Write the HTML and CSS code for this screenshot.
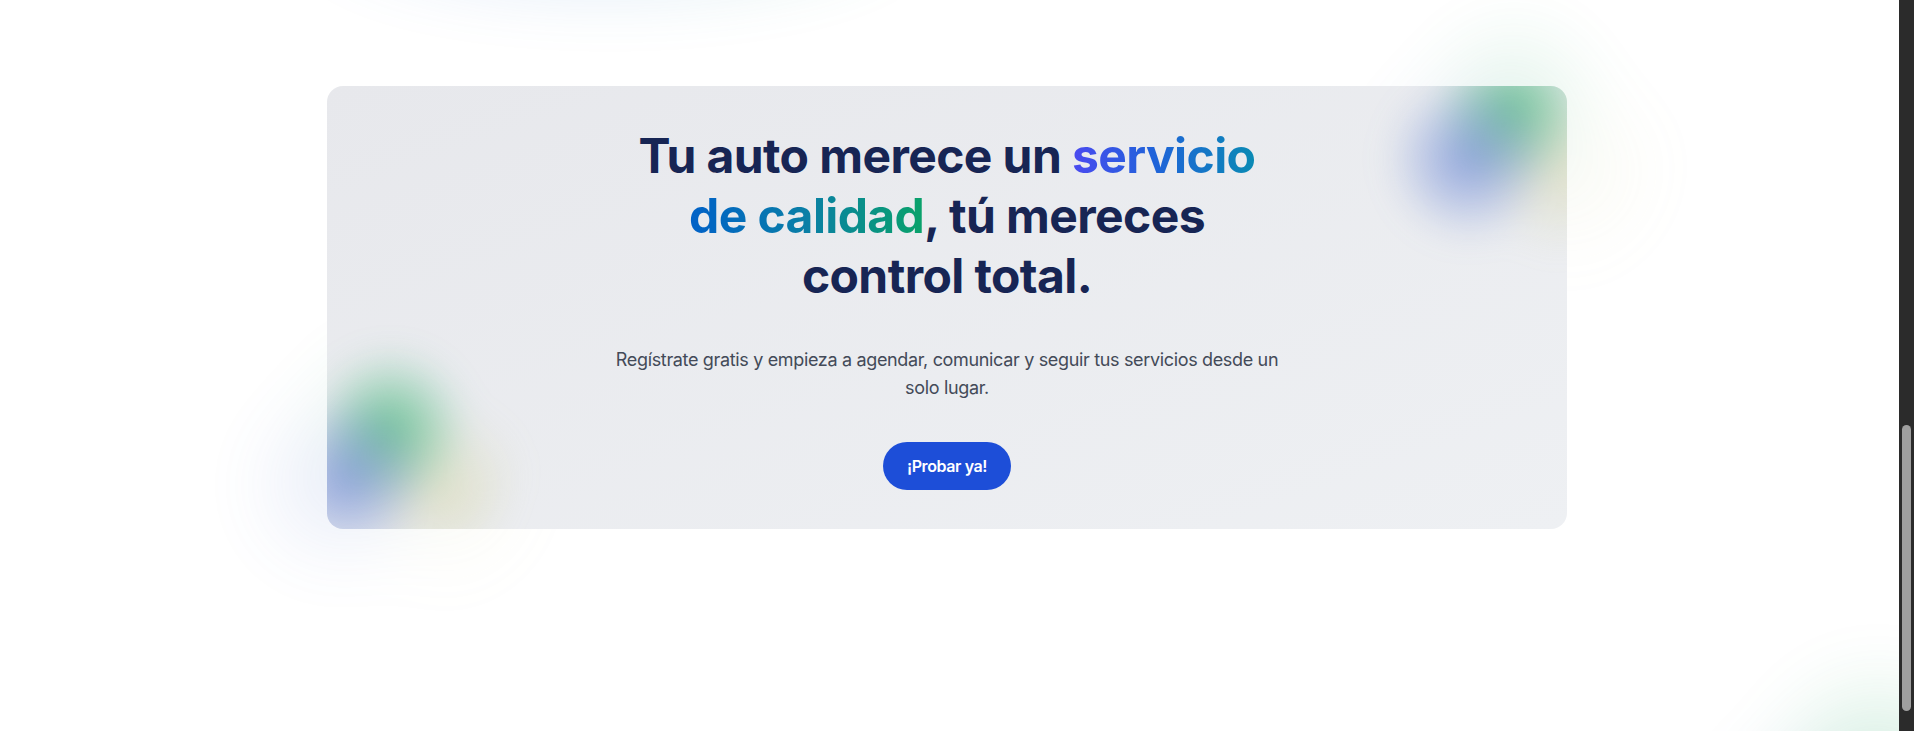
FILE: index.html
```html
<!DOCTYPE html>
<html lang="es">
<head>
<meta charset="utf-8">
<title>Tu auto merece un servicio de calidad</title>
<link rel="stylesheet" href="styles.css">
</head>
<body>
<div class="viewport">
  <main class="page">
    <div class="orb orb-top" aria-hidden="true"></div>
    <div class="orb halo halo-tr" aria-hidden="true"></div>
    <div class="orb halo halo-bl" aria-hidden="true"></div>
    <div class="orb orb-br" aria-hidden="true"></div>
    <section class="cta">
      <div class="card">
        <div class="orb glow glow-tr" aria-hidden="true"></div>
        <div class="orb glow glow-bl" aria-hidden="true"></div>
        <h2 class="title">Tu auto merece un <span class="grad grad-a">servicio</span> <span class="grad grad-b">de calidad</span>, tú mereces control total.</h2>
        <p class="lead">Regístrate gratis y empieza a agendar, comunicar y seguir tus servicios desde un solo lugar.</p>
        <a class="btn" href="#">¡Probar ya!</a>
      </div>
    </section>
  </main>
  <aside class="scrollbar" aria-hidden="true"><div class="thumb"></div></aside>
</div>
</body>
</html>
```
FILE: styles.css
```css
html, body {
  margin: 0;
  padding: 0;
  height: 100%;
  overflow: hidden;
  background: #ffffff;
}

.viewport {
  display: flex;
  height: 100vh;
}

.page {
  flex: 1;
  position: relative;
  overflow: hidden;
  background: #ffffff;
}

.cta {
  position: relative;
  z-index: 1;
  padding: 86px 5px 0 0;
}

.card {
  position: relative;
  overflow: hidden;
  width: 1240px;
  margin: 0 auto;
  box-sizing: border-box;
  border-radius: 16px;
  background: linear-gradient(to bottom right, #e7e8ec, #eef0f3);
  padding: 40px 24px 39px;
  display: flex;
  flex-direction: column;
  align-items: center;
  gap: 40px;
}

.title {
  position: relative;
  margin: 0;
  max-width: 640px;
  text-align: center;
  font-family: Inter, "Noto Sans", sans-serif;
  font-weight: 700;
  font-size: 48px;
  line-height: 60px;
  letter-spacing: -0.6px;
  color: #172554;
}

.grad {
  -webkit-background-clip: text;
  background-clip: text;
  -webkit-text-fill-color: transparent;
  color: transparent;
}

.grad-a {
  background-image: linear-gradient(90deg, #4a4af0 0%, #1f63d9 45%, #0a8ab4 100%);
}

.grad-b {
  background-image: linear-gradient(90deg, #0061c8 0%, #0a7fa6 50%, #0aa26a 100%);
}

.lead {
  position: relative;
  margin: 0;
  max-width: 672px;
  text-align: center;
  font-family: Inter, "Noto Sans", sans-serif;
  font-weight: 400;
  font-size: 18px;
  line-height: 28px;
  letter-spacing: -0.34px;
  color: #434a58;
}

.btn {
  position: relative;
  display: inline-block;
  padding: 12px 24px;
  border-radius: 9999px;
  background: #1d4ed8;
  color: #ffffff;
  text-decoration: none;
  font-family: Inter, "Noto Sans", sans-serif;
  font-weight: 600;
  font-size: 16px;
  line-height: 24px;
  letter-spacing: -0.4px;
}

/* decorative blurred orbs */
.orb {
  position: absolute;
  width: 260px;
  height: 260px;
  border-radius: 50%;
  pointer-events: none;
  background:
    radial-gradient(circle at 35% 60%, rgba(75, 110, 205, 0.58) 0%, rgba(75, 110, 205, 0) 36%),
    radial-gradient(circle at 52% 40%, rgba(34, 170, 95, 0.62) 0%, rgba(34, 170, 95, 0) 38%),
    radial-gradient(circle at 72% 64%, rgba(200, 200, 120, 0.32) 0%, rgba(200, 200, 120, 0) 34%);
}

.glow {
  filter: blur(16px);
}

.glow-tr {
  left: 1051px;
  top: -83px;
}

.glow-bl {
  left: -72px;
  top: 237px;
}

.halo {
  width: 320px;
  height: 320px;
  filter: blur(30px);
  opacity: 0.22;
}

.halo-tr {
  left: 1348px;
  top: -27px;
}

.halo-bl {
  left: 225px;
  top: 293px;
}

.orb-top {
  width: 620px;
  height: 180px;
  left: 300px;
  top: -160px;
  filter: blur(24px);
  opacity: 0.14;
  background:
    radial-gradient(ellipse at 40% 60%, rgba(70, 130, 215, 0.8) 0%, rgba(70, 130, 215, 0) 62%),
    radial-gradient(ellipse at 72% 60%, rgba(60, 180, 140, 0.6) 0%, rgba(60, 180, 140, 0) 55%);
}

.orb-br {
  width: 420px;
  height: 420px;
  left: 1660px;
  top: 610px;
  filter: blur(30px);
  opacity: 0.35;
}

/* scrollbar */
.scrollbar {
  width: 15px;
  flex: none;
  background: #2b2b2b;
}

.thumb {
  margin: 425px 3px 0;
  height: 286px;
  border-radius: 5px;
  background: #9f9f9f;
}
```
